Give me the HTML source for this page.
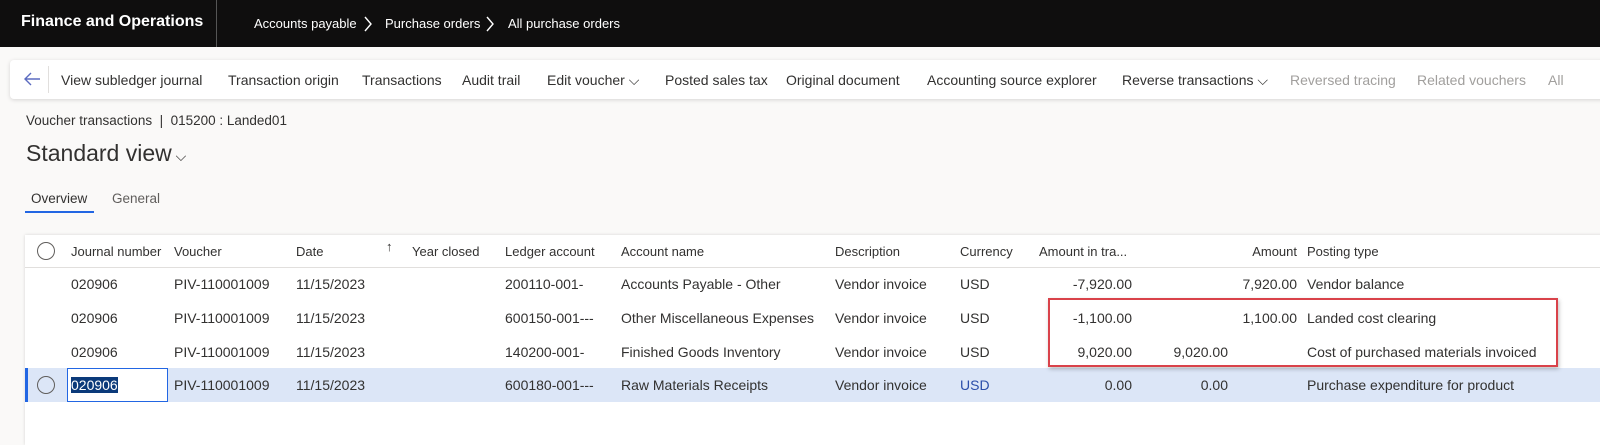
<!DOCTYPE html>
<html><head><meta charset="utf-8"><style>
*{margin:0;padding:0;box-sizing:border-box}
body{width:1600px;height:440px;background:#faf9f8;font-family:"Liberation Sans",sans-serif;color:#323130;position:relative;overflow:hidden;font-size:13.5px}
.a{position:absolute;white-space:nowrap}
.top{position:absolute;left:0;top:0;width:1600px;height:47px;background:#0f0e0e;color:#fff}
.tb{position:absolute;left:10px;top:60px;width:1600px;height:39px;background:#fff;border-radius:4px;box-shadow:0 1px 4px rgba(0,0,0,.15)}
.tb span{position:absolute;top:12px;font-size:14px;white-space:nowrap;color:#323130}
.grid{position:absolute;left:25px;top:235px;width:1580px;height:210px;background:#fff;box-shadow:0 0 3px rgba(0,0,0,.15)}
.r{position:absolute;left:25px;width:1580px;height:34px}
.c{position:absolute;top:9px;white-space:nowrap;font-size:14px;color:#323130}
.h{font-size:13px}
.rt{text-align:right}
.circ{position:absolute;width:18px;height:18px;border:1px solid #605e5c;border-radius:50%}
</style></head><body>
<div class="top">
<div class="a" style="left:21px;top:13px;font-size:16px;font-weight:bold">Finance and Operations</div>
<div class="a" style="left:216px;top:0;width:1px;height:47px;background:#555"></div>
<div class="a" style="left:254px;top:16px;font-size:13px">Accounts payable</div>
<svg class="a" style="left:363px;top:16px" width="10" height="16" viewBox="0 0 10 16"><path d="M2 1l6 7-6 7" stroke="#fff" stroke-width="1.4" fill="none"/></svg>
<div class="a" style="left:385px;top:16px;font-size:13px">Purchase orders</div>
<svg class="a" style="left:485px;top:16px" width="10" height="16" viewBox="0 0 10 16"><path d="M2 1l6 7-6 7" stroke="#fff" stroke-width="1.4" fill="none"/></svg>
<div class="a" style="left:508px;top:16px;font-size:13px">All purchase orders</div>
</div>
<div class="tb">
<svg class="a" style="left:13px;top:11px" width="18" height="16" viewBox="0 0 18 16"><path d="M17 8H2M8 2L2 8l6 6" stroke="#5b6bc0" stroke-width="1.4" fill="none"/></svg>
<div class="a" style="left:38px;top:6px;width:1px;height:27px;background:#e1dfdd"></div>
<span style="left:51px">View subledger journal</span>
<span style="left:218px">Transaction origin</span>
<span style="left:352px">Transactions</span>
<span style="left:452px">Audit trail</span>
<span style="left:537px">Edit voucher ⌵</span>
<span style="left:655px">Posted sales tax</span>
<span style="left:776px">Original document</span>
<span style="left:917px">Accounting source explorer</span>
<span style="left:1112px">Reverse transactions ⌵</span>
<span style="left:1280px;color:#a19f9d">Reversed tracing</span>
<span style="left:1407px;color:#a19f9d">Related vouchers</span>
<span style="left:1538px;color:#a19f9d">All</span>
</div>
<div class="a" style="left:26px;top:113px;font-size:13.5px">Voucher transactions &nbsp;| &nbsp;015200 : Landed01</div>
<div class="a" style="left:26px;top:140px;font-size:23px">Standard view<span style="font-size:14px"> ⌵</span></div>
<div class="a" style="left:31px;top:191px;font-size:13.5px">Overview</div>
<div class="a" style="left:112px;top:191px;font-size:13.5px;color:#605e5c">General</div>
<div class="a" style="left:25px;top:211px;width:69px;height:2px;background:#2266e3"></div>
<div class="grid"></div>
<div class="r" style="top:235px;border-bottom:1px solid #e1dfdd;height:33px">
<div class="circ" style="left:12px;top:7px"></div>
<span class="c h" style="left:46px">Journal number</span>
<span class="c h" style="left:149px">Voucher</span>
<span class="c h" style="left:271px">Date</span>
<span class="c h" style="left:361px;top:4px">↑</span>
<span class="c h" style="left:387px">Year closed</span>
<span class="c h" style="left:480px">Ledger account</span>
<span class="c h" style="left:596px">Account name</span>
<span class="c h" style="left:810px">Description</span>
<span class="c h" style="left:935px">Currency</span>
<span class="c h" style="left:1014px">Amount in tra...</span>
<span class="c h rt" style="left:1172px;width:100px">Amount</span>
<span class="c h" style="left:1282px">Posting type</span>
</div>
<div class="r" style="top:267px">
<span class="c" style="left:46px">020906</span><span class="c" style="left:149px">PIV-110001009</span><span class="c" style="left:271px">11/15/2023</span><span class="c" style="left:480px">200110-001-</span><span class="c" style="left:596px">Accounts Payable - Other</span><span class="c" style="left:810px">Vendor invoice</span><span class="c" style="left:935px">USD</span><span class="c rt" style="left:1007px;width:100px">-7,920.00</span><span class="c rt" style="left:1172px;width:100px">7,920.00</span><span class="c" style="left:1282px">Vendor balance</span>
</div>
<div class="r" style="top:301px">
<span class="c" style="left:46px">020906</span><span class="c" style="left:149px">PIV-110001009</span><span class="c" style="left:271px">11/15/2023</span><span class="c" style="left:480px">600150-001---</span><span class="c" style="left:596px">Other Miscellaneous Expenses</span><span class="c" style="left:810px">Vendor invoice</span><span class="c" style="left:935px">USD</span><span class="c rt" style="left:1007px;width:100px">-1,100.00</span><span class="c rt" style="left:1172px;width:100px">1,100.00</span><span class="c" style="left:1282px">Landed cost clearing</span>
</div>
<div class="r" style="top:335px">
<span class="c" style="left:46px">020906</span><span class="c" style="left:149px">PIV-110001009</span><span class="c" style="left:271px">11/15/2023</span><span class="c" style="left:480px">140200-001-</span><span class="c" style="left:596px">Finished Goods Inventory</span><span class="c" style="left:810px">Vendor invoice</span><span class="c" style="left:935px">USD</span><span class="c rt" style="left:1007px;width:100px">9,020.00</span><span class="c rt" style="left:1103px;width:100px">9,020.00</span><span class="c" style="left:1282px">Cost of purchased materials invoiced</span>
</div>
<div class="r" style="top:368px;background:#dce6f7">
<div class="a" style="left:0;top:0;width:3px;height:34px;background:#2266e3"></div>
<div class="circ" style="left:12px;top:8px"></div>
<div class="a" style="left:42px;top:0;width:101px;height:34px;border:1px solid #2266e3;background:#fff"></div>
<span class="c" style="left:46px;background:#0b3a7a;color:#fff">020906</span><span class="c" style="left:149px">PIV-110001009</span><span class="c" style="left:271px">11/15/2023</span><span class="c" style="left:480px">600180-001---</span><span class="c" style="left:596px">Raw Materials Receipts</span><span class="c" style="left:810px">Vendor invoice</span><span class="c" style="left:935px;color:#2b4eaa">USD</span><span class="c rt" style="left:1007px;width:100px">0.00</span><span class="c rt" style="left:1103px;width:100px">0.00</span><span class="c" style="left:1282px">Purchase expenditure for product</span>
</div>
<div class="a" style="left:1048px;top:298px;width:510px;height:69px;border:2px solid #d9424a;box-shadow:1px 2px 4px rgba(0,0,0,.25)"></div>
</body></html>
